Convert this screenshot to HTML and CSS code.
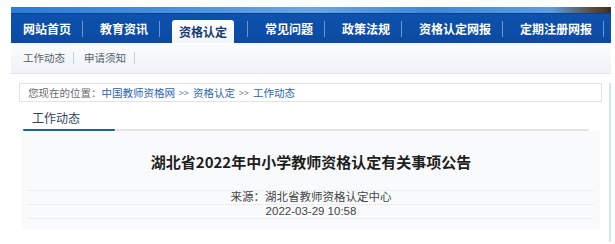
FILE: index.html
```html
<!DOCTYPE html>
<html lang="zh">
<head>
<meta charset="utf-8">
<title>湖北省2022年中小学教师资格认定有关事项公告</title>
<link rel="stylesheet" href="styles.css">
</head>
<body>
<div class="page">
  <div class="banner"></div>
  <nav class="nav">
    <a class="nav-item first">网站首页</a>
    <a class="nav-item">教育资讯</a>
    <a class="nav-item active"><span class="tab">资格认定</span></a>
    <a class="nav-item">常见问题</a>
    <a class="nav-item">政策法规</a>
    <a class="nav-item">资格认定网报</a>
    <a class="nav-item">定期注册网报</a>
  </nav>
  <div class="subnav">
    <a class="sub-item">工作动态</a>
    <a class="sub-item">申请须知</a>
  </div>
  <div class="main">
    <div class="crumb">
      <span class="crumb-label">您现在的位置：</span><a class="crumb-link">中国教师资格网</a><span class="crumb-sep">&gt;&gt;</span><a class="crumb-link">资格认定</a><span class="crumb-sep">&gt;&gt;</span><a class="crumb-link">工作动态</a>
    </div>
    <div class="section-head">
      <span class="section-title">工作动态</span>
    </div>
    <div class="article">
      <h1 class="title">湖北省2022年中小学教师资格认定有关事项公告</h1>
      <div class="meta">
        <div class="meta-row">来源：湖北省教师资格认定中心</div>
        <div class="meta-row">2022-03-29 10:58</div>
      </div>
    </div>
  </div>
</div>
</body>
</html>
```
FILE: styles.css
```css
* { box-sizing: border-box; }
html, body { margin: 0; padding: 0; background: #fff; }
body {
  font-family: "Liberation Sans", "Noto Sans CJK SC", sans-serif;
  color: #333;
}
a { text-decoration: none; color: inherit; }
.page {
  margin-left: 11px;
  width: 600px;
  padding-top: 7px;
}
.banner {
  height: 7px;
  background: linear-gradient(90deg, #2a7dd6 0%, #4a94e0 30%, #6aa6e4 50%, #3d89d9 70%, #5b9ee2 90%, #5a4a3a 97%, #3a3028 100%);
  border-bottom: 1px solid #0a3f8e;
}
.nav {
  height: 29px;
  background: linear-gradient(#0d52ad, #0b4aa3);
  display: flex;
  align-items: flex-end;
}
.nav-item {
  position: relative;
  height: 29px;
  display: flex;
  align-items: center;
  padding: 0 12px 0 17px;
  color: #fff;
  font-size: 12px;
  font-weight: bold;
  font-family: "Noto Sans CJK SC", sans-serif;
}
.nav-item.first { padding-left: 12px; }
.nav-item::after {
  content: "";
  position: absolute;
  right: 0;
  top: 7px;
  height: 16px;
  width: 1px;
  background: rgba(170, 200, 235, 0.6);
}
.nav-item.active {
  padding: 0 14px 0 12px;
  align-items: flex-end;
}
.tab {
  display: flex;
  align-items: center;
  justify-content: center;
  height: 23px;
  width: 62px;
  background: linear-gradient(#ffffff, #f2f6fa);
  border-radius: 3px 3px 0 0;
  color: #173a6e;
}
.subnav {
  height: 31px;
  background: linear-gradient(#fbfcfd, #eff3f7);
  border-bottom: 1px solid #dfe4ea;
  display: flex;
  align-items: center;
  padding-left: 12px;
}
.sub-item {
  font-size: 10.5px;
  color: #55606b;
  padding-right: 8px;
  margin-right: 10px;
  border-right: 1px solid #c9ced4;
  line-height: 12px;
  font-family: "Noto Sans CJK SC", sans-serif;
}
.main {
  margin-top: 9px;
  border-right: 2px solid #d5e4f3;
  padding-bottom: 12px;
}
.crumb {
  margin-left: 8px;
  width: 583px;
  height: 19px;
  border: 1px solid #e3e3e3;
  display: flex;
  align-items: center;
  padding-left: 8px;
  font-size: 10.5px;
  font-family: "Noto Sans CJK SC", sans-serif;
}
.crumb-label { color: #6b6b6b; }
.crumb-link { color: #2b63b3; }
.crumb-sep { color: #6b7a90; margin: 0 4px; font-size: 9px; }
.section-head {
  margin: 7px 0 0 12px;
  width: 566px;
  height: 22px;
  border-bottom: 2px solid #e5e5e5;
  position: relative;
  padding-left: 9px;
}
.section-head::after {
  content: "";
  position: absolute;
  left: 0;
  bottom: -2px;
  width: 92px;
  height: 2px;
  border-radius: 1px;
  background: #1f5e97;
}
.section-title {
  font-size: 12px;
  line-height: 18px;
  color: #2d4359;
  font-family: "Noto Sans CJK SC", serif;
}
.article {
  margin-left: 11px;
  width: 578px;
  background: #f9fafb;
  padding: 19px 6px 0;
  height: 99px;
}
.title {
  margin: 0;
  text-align: center;
  font-size: 15px;
  line-height: 24px;
  font-weight: bold;
  color: #1e1e1e;
  font-family: "Noto Sans CJK SC", sans-serif;
}
.meta {
  margin-top: 16px;
  border-top: 1px dotted #e2e2e2;
}
.meta-row {
  height: 14px;
  line-height: 13px;
  text-align: center;
  font-size: 11.5px;
  color: #444;
  border-bottom: 1px dotted #e2e2e2;
  font-family: "Liberation Sans", "Noto Sans CJK SC", sans-serif;
}
```
